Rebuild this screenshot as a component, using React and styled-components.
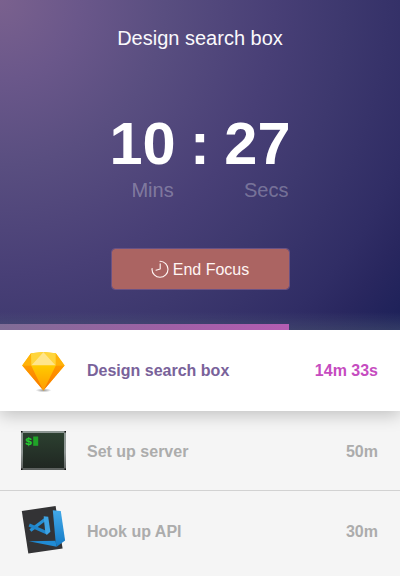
import React from "react";
import styled, { createGlobalStyle } from "styled-components";

const GlobalStyle = createGlobalStyle`
  * { box-sizing: border-box; }
  body {
    margin: 0;
    background: #f5f5f5;
    font-family: "Liberation Sans", Helvetica, Arial, sans-serif;
  }
`;

const Window = styled.main`
  width: 400px;
  height: 576px;
  overflow: hidden;
  background: #f5f5f5;
`;

const TimerPanel = styled.section`
  height: 330px;
  display: flex;
  flex-direction: column;
  align-items: center;
  color: #fff;
  background: radial-gradient(
    circle at 0 0,
    #7a618e 0,
    #6a578a 80px,
    #594e80 165px,
    #483f76 275px,
    #3d386e 345px,
    #302d65 430px,
    #29275f 465px,
    #1b2058 520px
  );
`;

const Title = styled.h1`
  margin: 26px 0 0;
  font-size: 20px;
  line-height: 24px;
  font-weight: 400;
  color: #faf9fc;
`;

const Clock = styled.div`
  margin-top: 60px;
  width: 181px;
  display: flex;
  justify-content: space-between;
`;

const ClockUnit = styled.div`
  display: flex;
  flex-direction: column;
  align-items: flex-end;
`;

const Digits = styled.span`
  font-size: 59.5px;
  line-height: 68px;
  font-weight: 700;
`;

const UnitLabel = styled.span`
  padding-right: 2px;
  font-size: 20px;
  line-height: 24px;
  color: rgba(255, 255, 255, 0.3);
`;

const FocusButton = styled.button`
  margin-top: 46px;
  width: 179px;
  height: 42px;
  padding: 0;
  display: flex;
  align-items: center;
  justify-content: center;
  gap: 4px;
  border: 1px solid #6a5284;
  border-radius: 4px;
  background: #ab6462;
  background-clip: padding-box;
  color: #fff5f3;
  font: 400 16px/18px "Liberation Sans", Helvetica, Arial, sans-serif;
`;

const ButtonLabel = styled.span`
  padding-top: 2px;
`;

const Progress = styled.div`
  width: 100%;
  height: 18px;
  margin-top: auto;
  display: flex;
  align-items: flex-end;
  background: linear-gradient(transparent, rgba(90, 105, 130, 0.38));
`;

const ProgressFill = styled.div`
  height: 6px;
  background: linear-gradient(90deg, #806d96, #a060a6 60%, #b45db2);
`;

const TaskList = styled.ul`
  margin: 0;
  padding: 0;
  list-style: none;
`;

const Task = styled.li`
  height: ${(p) => (p.$active ? 81 : 80)}px;
  padding: 0 22px 0 21px;
  display: flex;
  align-items: center;
  font-size: 16px;
  line-height: 20px;
  font-weight: 700;
  color: ${(p) => (p.$active ? "#79629a" : "#acacac")};
  background: ${(p) => (p.$active ? "#fff" : "transparent")};
  box-shadow: ${(p) => (p.$active ? "0 4px 16px rgba(0, 0, 0, 0.22)" : "none")};
  border-bottom: ${(p) => (p.$divided ? "1px solid #d2d2d2" : "0")};
`;

const TaskIcon = styled.div`
  width: 45px;
  height: 50px;
  margin-right: 21px;
  display: flex;
  align-items: center;
  svg { display: block; }
`;

const TaskText = styled.div`
  flex: 1;
  display: flex;
  justify-content: space-between;
  padding-top: ${(p) => (p.$active ? 0 : 2)}px;
`;

const Duration = styled.span`
  color: ${(p) => (p.$active ? "#c64cc0" : "#acacac")};
`;

function ClockIcon() {
  return (
    <svg width="18" height="18" viewBox="0 0 18 18" fill="none" stroke="#fff5f3" strokeWidth="1.15" strokeLinecap="round" strokeLinejoin="round">
      <path d="M9.2 3.8V9L5 10.2M9 1.2A8 8 0 1 1 1 9.2L1.1 8.5" />
    </svg>
  );
}

function SketchIcon() {
  return (
    <svg width="45" height="50" viewBox="0 0 45 50">
      <defs>
        <radialGradient id="gemShadow">
          <stop offset="0" stopColor="#000" stopOpacity=".4" />
          <stop offset="1" stopColor="#000" stopOpacity="0" />
        </radialGradient>
        <linearGradient id="gemBody" x2="0" y2="1">
          <stop offset="0" stopColor="#ffcb00" />
          <stop offset="1" stopColor="#ff9b00" />
        </linearGradient>
        <linearGradient id="gemSide" x2="0" y2="1">
          <stop offset="0" stopColor="#ff9a00" />
          <stop offset="1" stopColor="#f87400" />
        </linearGradient>
      </defs>
      <ellipse cx="22.5" cy="44.3" rx="8" ry="2" fill="url(#gemShadow)" />
      <path d="M10 7.2 22.4 6 34.8 7.2 43.6 19.6 22.4 44.4 1.2 19.6Z" fill="#ffc40b" />
      <path d="M10 7.2 22.4 6 10.2 19.6Z" fill="#ffd53c" />
      <path d="M22.4 6 34.8 7.2v12.4Z" fill="#ffd53c" />
      <path d="M10 7.2 1.2 19.6h9Z" fill="#ffb208" />
      <path d="M34.8 7.2 43.6 19.6h-8.8Z" fill="#ffb208" />
      <path d="M22.4 6 34.8 19.6H10.2Z" fill="#ffe58a" />
      <path d="M10.2 19.6h24.6L22.4 44.4Z" fill="url(#gemBody)" />
      <path d="M1.2 19.6h9L22.4 44.4Z" fill="url(#gemSide)" />
      <path d="M43.6 19.6h-8.8L22.4 44.4Z" fill="url(#gemSide)" />
    </svg>
  );
}

function TerminalIcon() {
  return (
    <svg width="45" height="39" viewBox="0 0 45 39">
      <defs>
        <linearGradient id="termFrame" x2="0" y2="1">
          <stop offset="0" stopColor="#8c9692" />
          <stop offset=".55" stopColor="#919896" />
          <stop offset="1" stopColor="#5a5e5c" />
        </linearGradient>
        <linearGradient id="termScreen" x2="0" y2="1">
          <stop offset="0" stopColor="#2c4030" />
          <stop offset="1" stopColor="#202722" />
        </linearGradient>
      </defs>
      <rect width="45" height="39" fill="url(#termFrame)" />
      <path d="M0 0h1.5v1.5H0ZM43.5 0H45v1.5h-1.5ZM0 37.5h1.5V39H0ZM43.5 37.5H45V39h-1.5Z" fill="#111" />
      <rect x="2" y="2" width="41" height="35" fill="url(#termScreen)" />
      <text x="4.2" y="14.1" fill="#25ce30" stroke="#25ce30" strokeWidth=".2" fontFamily="Liberation Mono, monospace" fontSize="11.5" fontWeight="700">$</text>
      <rect x="12.2" y="5.5" width="5" height="9.3" fill="#20a328" />
    </svg>
  );
}

function EditorIcon() {
  return (
    <svg width="45" height="50" viewBox="0 0 45 50">
      <defs>
        <linearGradient id="editorBlue" x2="0" y2="1">
          <stop offset="0" stopColor="#42a9e9" />
          <stop offset="1" stopColor="#147ac5" />
        </linearGradient>
      </defs>
      <path d="M.8 5 34.6 0 41.6 42.6 7.3 47.4Z" fill="#333335" />
      <path d="M31.8 4.2 39.8 5 44.1 34.5 35.6 40.8 34.5 34.5Z" fill="url(#editorBlue)" />
      <path d="M7.8 35.3 34.5 34.8 35.6 40.8Z" fill="#208bd4" />
      <path d="M24.6 13 9.4 24.6" fill="none" stroke="#2690d4" strokeWidth="3.1" />
      <path d="M8.2 19 26.3 27" fill="none" stroke="#2085ca" strokeWidth="3.1" />
      <path d="M22.7 10.2 27.2 10.8 29.4 25.7 25.8 29 24.4 27 23 14.5Z" fill="#3da3e3" />
    </svg>
  );
}

const tasks = [
  { name: "Design search box", duration: "14m 33s", Icon: SketchIcon, active: true },
  { name: "Set up server", duration: "50m", Icon: TerminalIcon, divided: true },
  { name: "Hook up API", duration: "30m", Icon: EditorIcon },
];

export default function App() {
  return (
    <Window>
      <GlobalStyle />
      <TimerPanel>
        <Title>Design search box</Title>
        <Clock>
          <ClockUnit>
            <Digits>10</Digits>
            <UnitLabel>Mins</UnitLabel>
          </ClockUnit>
          <Digits>:</Digits>
          <ClockUnit>
            <Digits>27</Digits>
            <UnitLabel>Secs</UnitLabel>
          </ClockUnit>
        </Clock>
        <FocusButton>
          <ClockIcon />
          <ButtonLabel>End Focus</ButtonLabel>
        </FocusButton>
        <Progress>
          <ProgressFill style={{ width: "72.25%" }} />
        </Progress>
      </TimerPanel>
      <TaskList>
        {tasks.map(({ name, duration, Icon, active, divided }) => (
          <Task key={name} $active={active} $divided={divided}>
            <TaskIcon><Icon /></TaskIcon>
            <TaskText $active={active}>
              <span>{name}</span>
              <Duration $active={active}>{duration}</Duration>
            </TaskText>
          </Task>
        ))}
      </TaskList>
    </Window>
  );
}
